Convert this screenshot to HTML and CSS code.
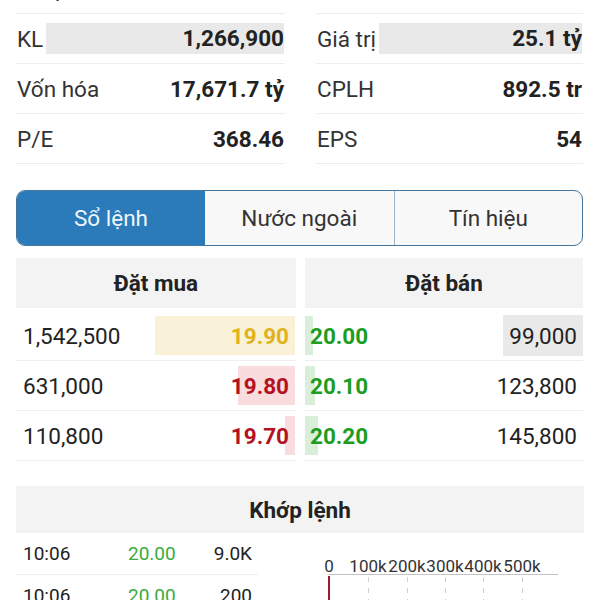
FILE: index.html
```html
<!DOCTYPE html>
<html lang="vi">
<head>
<meta charset="utf-8">
<title>Sổ lệnh</title>
<link rel="stylesheet" href="styles.css">
</head>
<body>
<div class="page">
  <section class="stats">
    <div class="col">
      <div class="stat"><span class="label">Thấp</span><span class="val">19.60</span></div>
      <div class="stat"><span class="label">KL</span><span class="val hl">1,266,900</span></div>
      <div class="stat"><span class="label">Vốn hóa</span><span class="val">17,671.7 tỷ</span></div>
      <div class="stat"><span class="label">P/E</span><span class="val">368.46</span></div>
    </div>
    <div class="col">
      <div class="stat"><span class="label">Cao</span><span class="val">20.10</span></div>
      <div class="stat"><span class="label">Giá trị</span><span class="val hl">25.1 tỷ</span></div>
      <div class="stat"><span class="label">CPLH</span><span class="val">892.5 tr</span></div>
      <div class="stat"><span class="label">EPS</span><span class="val">54</span></div>
    </div>
  </section>

  <nav class="tabs">
    <div class="tab active">Sổ lệnh</div>
    <div class="tab">Nước ngoài</div>
    <div class="tab sep">Tín hiệu</div>
  </nav>

  <section class="book">
    <div class="side">
      <div class="book-head">Đặt mua</div>
      <div class="book-row">
        <span class="qty">1,542,500</span>
        <span class="bid-price ref" style="--w:140px">19.90</span>
      </div>
      <div class="book-row">
        <span class="qty">631,000</span>
        <span class="bid-price down" style="--w:57px">19.80</span>
      </div>
      <div class="book-row">
        <span class="qty">110,800</span>
        <span class="bid-price down" style="--w:10px">19.70</span>
      </div>
    </div>
    <div class="side">
      <div class="book-head">Đặt bán</div>
      <div class="book-row">
        <span class="ask-price up" style="--w:8px">20.00</span>
        <span class="ask-vol" style="--w:80px">99,000</span>
      </div>
      <div class="book-row">
        <span class="ask-price up" style="--w:10px">20.10</span>
        <span class="ask-vol" style="--w:0px">123,800</span>
      </div>
      <div class="book-row">
        <span class="ask-price up" style="--w:13px">20.20</span>
        <span class="ask-vol" style="--w:0px">145,800</span>
      </div>
    </div>
  </section>

  <section class="match">
    <div class="match-head">Khớp lệnh</div>
    <div class="match-body">
      <div class="trades">
        <div class="trade"><span>10:06</span><span class="tp">20.00</span><span class="tv">9.0K</span></div>
        <div class="trade"><span>10:06</span><span class="tp">20.00</span><span class="tv">200</span></div>
      </div>
      <svg class="chart" width="326" height="80" viewBox="0 0 326 80">
        <g class="ticks">
          <text x="71" y="39">0</text>
          <text x="110" y="39">100k</text>
          <text x="149" y="39">200k</text>
          <text x="187" y="39">300k</text>
          <text x="225" y="39">400k</text>
          <text x="264" y="39">500k</text>
        </g>
        <line x1="70" y1="41.5" x2="300" y2="41.5" stroke="#c4c4c4" stroke-width="1"/>
        <g stroke="#d0d0d0" stroke-width="1" stroke-dasharray="5 6">
          <line x1="110.5" y1="44" x2="110.5" y2="80"/>
          <line x1="149.5" y1="44" x2="149.5" y2="80"/>
          <line x1="187.5" y1="44" x2="187.5" y2="80"/>
          <line x1="225.5" y1="44" x2="225.5" y2="80"/>
          <line x1="264.5" y1="44" x2="264.5" y2="80"/>
        </g>
        <rect x="70" y="43" width="2" height="40" fill="#9e1c2c"/>
      </svg>
    </div>
  </section>
</div>
</body>
</html>
```
FILE: styles.css
```css
body {
  margin: 0;
  background: #fff;
  color: #222;
  font-family: Roboto, "Noto Sans", "Liberation Sans", sans-serif;
}

.page {
  margin-top: -37px;
}

/* stats */
.stats {
  display: grid;
  grid-template-columns: 269px 267px;
  column-gap: 31px;
  padding: 0 16px;
}

.stat {
  height: 49px;
  border-bottom: 1px solid #ededed;
  display: flex;
  align-items: center;
  padding: 0 1px;
  font-size: 22.5px;
}

.stat:first-child {
  height: 50px;
}

.stat .label {
  color: #333;
  white-space: nowrap;
}

.stat .val {
  margin-left: auto;
  font-weight: 700;
  color: #222;
  white-space: nowrap;
}

.stat .val.hl {
  flex: 1;
  margin-left: 3px;
  height: 31px;
  line-height: 31px;
  background: #e9e9e9;
  text-align: right;
}

/* tabs */
.tabs {
  margin: 26px 17px 0 16px;
  height: 56px;
  box-sizing: border-box;
  display: grid;
  grid-template-columns: 188px 1fr 1fr;
  border: 1.5px solid #46769c;
  border-radius: 9px;
  overflow: hidden;
  background: #f8f8f8;
}

.tab {
  display: flex;
  align-items: center;
  justify-content: center;
  font-size: 22.5px;
  color: #333;
}

.tab.active {
  background: #2b7bba;
  color: #eef5fb;
}

.tab.sep {
  border-left: 1px solid #9fb4c5;
}

/* order book */
.book {
  display: grid;
  grid-template-columns: 280px 278px;
  column-gap: 9px;
  margin: 12px 17px 0 16px;
}

.book-head {
  height: 50px;
  margin-bottom: 3px;
  background: #f3f3f3;
  display: flex;
  align-items: center;
  justify-content: center;
  font-size: 22.5px;
  font-weight: 700;
  color: #222;
}

.book-row {
  height: 49px;
  border-bottom: 1px solid #eeeeee;
  display: flex;
  align-items: center;
  font-size: 22.5px;
}

.qty {
  padding-left: 7px;
  color: #222;
}

.bid-price {
  margin-left: auto;
  width: 150px;
  height: 39px;
  box-sizing: border-box;
  padding-right: 6px;
  display: flex;
  align-items: center;
  justify-content: flex-end;
  font-weight: 700;
  margin-right: 1px;
  background: linear-gradient(to left, var(--bar) var(--w), transparent var(--w));
}

.bid-price.ref {
  color: #e2b21c;
  --bar: #f9f2d8;
}

.bid-price.down {
  color: #b3121f;
  --bar: #f9dcdd;
}

.ask-price {
  width: 120px;
  height: 39px;
  box-sizing: border-box;
  padding-left: 5px;
  display: flex;
  align-items: center;
  font-weight: 700;
  background: linear-gradient(to right, var(--bar) var(--w), transparent var(--w));
}

.ask-price.up {
  color: #1c9d22;
  --bar: #d9efd9;
}

.ask-vol {
  margin-left: auto;
  width: 120px;
  height: 41px;
  box-sizing: border-box;
  padding-right: 6px;
  display: flex;
  align-items: center;
  justify-content: flex-end;
  color: #222;
  background: linear-gradient(to left, #e9e9e9 var(--w), transparent var(--w));
}

/* matched orders */
.match {
  margin: 25px 16px 0;
}

.match-head {
  height: 47px;
  background: #f3f3f3;
  display: flex;
  align-items: center;
  justify-content: center;
  font-size: 22.5px;
  font-weight: 700;
  color: #222;
}

.match-body {
  display: flex;
  align-items: flex-start;
}

.trades {
  width: 242px;
  flex: none;
}

.trade {
  height: 41px;
  border-bottom: 1px solid #eeeeee;
  display: grid;
  grid-template-columns: 105px 70px 1fr;
  align-items: center;
  padding: 0 6px 0 7px;
  font-size: 19px;
  color: #222;
}

.trade .tp {
  color: #3aab3c;
}

.trade .tv {
  text-align: right;
}

.chart {
  display: block;
  flex: none;
}

.chart .ticks text {
  font-family: Roboto, "Noto Sans", sans-serif;
  font-size: 17px;
  fill: #333;
  text-anchor: middle;
}
```
